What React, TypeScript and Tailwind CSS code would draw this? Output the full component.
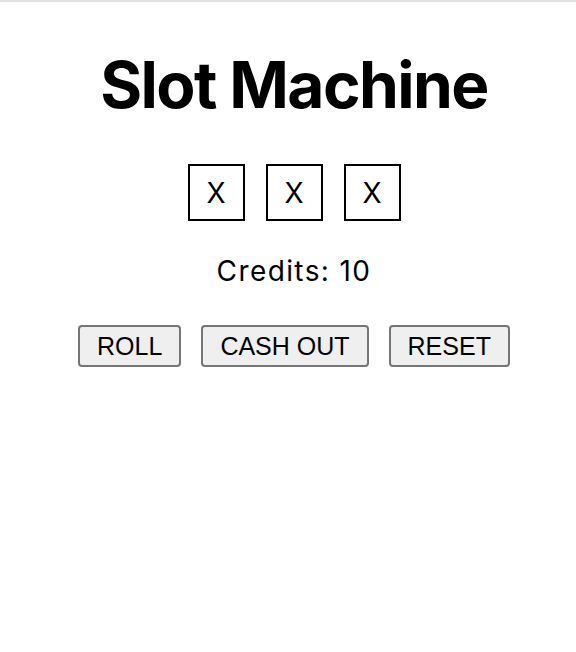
export default function App(): React.JSX.Element {
  const reels = ["X", "X", "X"];
  const buttons = ["ROLL", "CASH OUT", "RESET"];

  return (
    <div className="min-h-[652px] border-t-2 border-[#e2e2e2] bg-white pl-[12px] text-black">
      <main className="flex flex-col items-center">
        <h1 className="mt-[40px] font-['Inter',sans-serif] text-[64px] leading-[86px] font-bold tracking-[-1.6px]">
          Slot Machine
        </h1>
        <div className="mt-[36px] flex gap-[21px]">
          {reels.map((r, i) => (
            <div
              key={i}
              className="flex size-[57px] items-center justify-center border-2 border-black font-['Inter',sans-serif] text-[28px]"
            >
              {r}
            </div>
          ))}
        </div>
        <p className="mt-[33px] font-['Inter',sans-serif] text-[28px] leading-[34px] tracking-[1.4px]">
          Credits: 10
        </p>
        <div className="mt-[37px] flex gap-[20px]">
          {buttons.map((b) => (
            <button
              key={b}
              className="h-[42px] rounded-[4px] border-2 border-[#767676] bg-[#efefef] px-[17px] font-['Liberation_Sans',Arial,sans-serif] text-[25px] leading-none"
            >
              {b}
            </button>
          ))}
        </div>
      </main>
    </div>
  );
}
